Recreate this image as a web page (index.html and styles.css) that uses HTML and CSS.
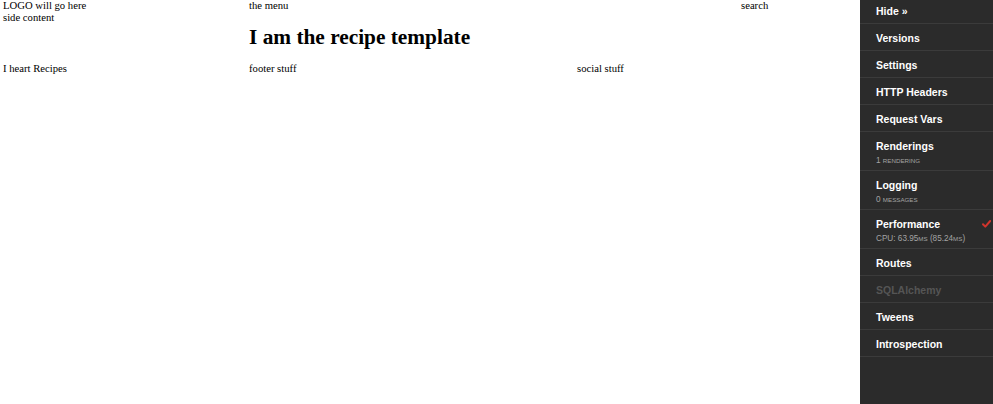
FILE: index.html
```html
<!DOCTYPE html>
<html>
<head>
<meta charset="utf-8">
<title>Recipe</title>
<link rel="stylesheet" href="styles.css">
</head>
<body>
<div class="layout">
  <div class="page">
    <div class="row head">
      <div class="c1">LOGO will go here</div>
      <div class="c2">the menu</div>
      <div class="c4">search</div>
    </div>
    <div class="row mid">
      <div class="c1">side content</div>
      <div class="c2"><h1 class="title">I am the recipe template</h1></div>
    </div>
    <div class="row foot">
      <div class="c1">I heart Recipes</div>
      <div class="c2">footer stuff</div>
      <div class="c3">social stuff</div>
    </div>
  </div>
  <aside class="toolbar">
    <ul class="panels">
      <li class="panel hide"><span class="name">Hide &raquo;</span></li>
      <li class="panel"><span class="name">Versions</span></li>
      <li class="panel"><span class="name">Settings</span></li>
      <li class="panel"><span class="name">HTTP Headers</span></li>
      <li class="panel"><span class="name">Request Vars</span></li>
      <li class="panel two"><span class="name">Renderings</span><small class="sub">1 <span class="sc">rendering</span></small></li>
      <li class="panel two"><span class="name">Logging</span><small class="sub">0 <span class="sc">messages</span></small></li>
      <li class="panel two"><span class="name line"><span>Performance</span><svg class="check" width="9" height="8" viewBox="0 0 9 8"><path d="M1 4.2 L3.3 6.6 L8.2 1" fill="none" stroke="#d0342c" stroke-width="2" stroke-linecap="round" stroke-linejoin="round"/></svg></span><small class="sub">CPU: 63.95<span class="sc">ms</span> (85.24<span class="sc">ms</span>)</small></li>
      <li class="panel"><span class="name">Routes</span></li>
      <li class="panel off"><span class="name">SQLAlchemy</span></li>
      <li class="panel"><span class="name">Tweens</span></li>
      <li class="panel"><span class="name">Introspection</span></li>
    </ul>
  </aside>
</div>
</body>
</html>
```

FILE: styles.css
```css
html, body {
  margin: 0;
  padding: 0;
  height: 100%;
  background: #fff;
}
.layout {
  display: flex;
  height: 100vh;
}
.page {
  flex: 1;
  padding-left: 3px;
  font-family: "Liberation Serif", "Times New Roman", serif;
  font-size: 10.67px;
  color: #000;
  margin-top: -1px;
}
.row {
  display: grid;
  grid-template-columns: 246px 328px 164px 1fr;
}
.c1 { grid-column: 1; }
.c2 { grid-column: 2; }
.c3 { grid-column: 3; }
.c4 { grid-column: 4; }
.head .c2 { grid-column: 2 / 4; }
.mid .c2 { grid-column: 2 / 5; }
.title {
  font-size: 21.33px;
  font-weight: bold;
  margin: 14.3px 0 11.3px;
}
.toolbar {
  width: 133px;
  flex: none;
  background: #2b2b2b;
  font-family: "Liberation Sans", Arial, sans-serif;
}
.panels {
  list-style: none;
  margin: 0;
  padding: 0;
}
.panel {
  display: block;
  padding: 8px 2px 5px 16px;
  border-bottom: 1px solid #3b3b3b;
  color: #fff;
}
.panel.hide {
  padding-top: 5px;
}
.panel.two {
  padding-bottom: 4px;
}
.name {
  display: block;
  font-size: 10.5px;
  font-weight: bold;
  line-height: 13px;
}
.name.line {
  display: flex;
  justify-content: space-between;
  align-items: center;
}
.check {
  display: block;
  margin-top: -1px;
}
.sub {
  display: block;
  margin-top: 2px;
  font-size: 8.2px;
  line-height: 11px;
  color: #a3a3a3;
}
.sc {
  font-size: 6.2px;
  text-transform: uppercase;
}
.off {
  color: #555;
}
```
